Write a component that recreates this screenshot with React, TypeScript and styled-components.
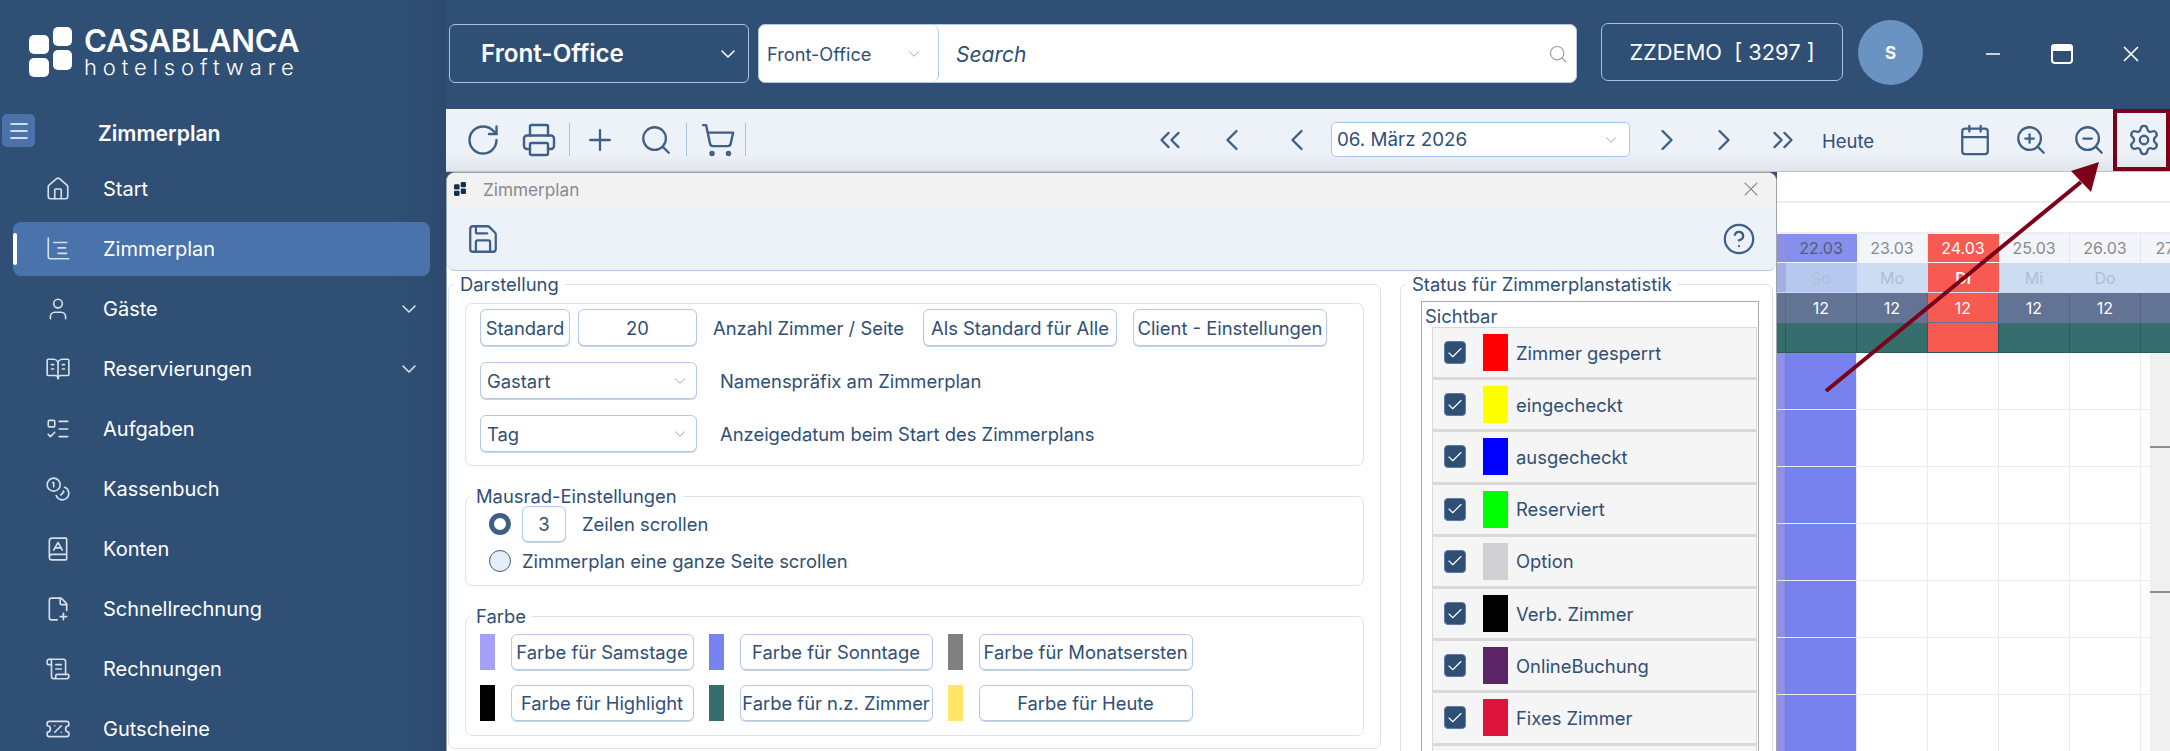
import React from 'react';
import styled, { createGlobalStyle } from 'styled-components';
import {
  RotateCw, Printer, Plus, Search, ShoppingCart, ChevronsLeft, ChevronLeft, ChevronRight, ChevronsRight,
  Calendar, ZoomIn, ZoomOut, Settings, Save, CircleHelp, X, Minus, House, Check, User, BookOpenText,
  ListTodo, Coins, BookA, FilePlus2, ScrollText, TicketPercent, ChevronDown, Menu,
} from 'lucide-react';

const Global = createGlobalStyle`
  html, body { margin: 0; padding: 0; height: 100%; overflow: hidden; background: #304f75; }
  * { box-sizing: border-box; }
  body { font-family: Inter, "Liberation Sans", sans-serif; color: #304f75; }
`;

const Page = styled.div`
  position: relative;
  display: flex;
  width: 2170px;
  height: 751px;
  overflow: hidden;
`;
const Sidebar = styled.aside`
  width: 446px;
  flex: none;
  background: linear-gradient(90deg, #304f75 88%, #2d4a6e 100%);
  color: #fff;
`;
const LogoBlock = styled.div`
  height: 109px;
  padding: 27px 0 0 29px;
  display: flex;
  gap: 12px;
`;
const LogoWords = styled.div`
  display: flex;
  flex-direction: column;
`;
const LogoTop = styled.div`
  font-size: 31.3px;
  font-weight: 600;
  line-height: 29px;
  letter-spacing: -0.2px;
`;
const LogoBottom = styled.div`
  font-size: 22px;
  font-weight: 300;
  line-height: 22px;
  letter-spacing: 5.9px;
  white-space: nowrap;
`;
const SideTitleRow = styled.div`
  height: 53px;
  display: flex;
  align-items: flex-start;
  padding: 5px 0 0 2px;
`;
const Burger = styled.div`
  width: 33px;
  height: 33px;
  background: #4a72ab;
  border-radius: 5px;
  display: flex;
  align-items: center;
  justify-content: center;
`;
const SideTitle = styled.div`
  margin: 6px 0 0 63px;
  font-size: 21.2px;
  line-height: 26px;
  font-weight: 600;
`;
const NavItem = styled.div<{ $active?: boolean }>`
  position: relative;
  width: 417px;
  height: 54px;
  margin: 0 0 6px 13px;
  padding: 0 9px 0 32px;
  display: flex;
  align-items: center;
  gap: 32px;
  font-size: 20px;
  border-radius: 8px;
  background: ${(p) => (p.$active ? '#4a72ab' : 'transparent')};
  svg { color: #d6dfea; flex: none; }
`;
const ActiveBar = styled.span`
  position: absolute;
  left: 0;
  top: 11px;
  width: 4px;
  height: 32px;
  background: #fff;
  border-radius: 2px;
`;
const NavChevron = styled.span`
  margin-left: auto;
  display: flex;
`;
const Right = styled.div`
  flex: 1;
  min-width: 0;
  display: flex;
  flex-direction: column;
`;
const Header = styled.header`
  height: 109px;
  flex: none;
  display: flex;
  align-items: flex-start;
  padding: 24px 0 0 3px;
  background: #304f75;
`;
const AreaSelect = styled.div`
  width: 300px;
  height: 59px;
  border: 1px solid #a9c1df;
  border-radius: 6px;
  display: flex;
  align-items: center;
  justify-content: space-between;
  padding: 0 8px 0 31px;
  color: #fff;
  font-size: 24.2px;
  font-weight: 600;
`;
const SearchBox = styled.div`
  width: 819px;
  height: 59px;
  margin-left: 9px;
  background: #fff;
  border: 1px solid #b3c9e4;
  border-radius: 7px;
  display: flex;
  align-items: center;
`;
const SearchScope = styled.div`
  width: 180px;
  height: 100%;
  border-right: 1px solid #b3c9e4;
  border-radius: 0 7px 7px 0;
  display: flex;
  align-items: center;
  justify-content: space-between;
  padding: 1px 15px 0 8px;
  font-size: 18.2px;
  color: #304f75;
  svg { color: #8a9bb0; }
`;
const SearchText = styled.div`
  flex: 1;
  padding: 1px 0 0 17px;
  font-size: 21px;
  font-style: italic;
`;
const SearchIcon = styled.span`
  display: flex;
  color: #9a9a9a;
  margin-right: 8px;
`;
const CompanyBadge = styled.div`
  width: 242px;
  height: 58px;
  margin: -1px 0 0 24px;
  border: 1px solid #a9c1df;
  border-radius: 7px;
  display: flex;
  align-items: center;
  justify-content: center;
  color: #fff;
  font-size: 21.8px;
  white-space: pre;
`;
const Avatar = styled.div`
  width: 65px;
  height: 65px;
  margin: -4px 0 0 15px;
  border-radius: 50%;
  background: #6a93c1;
  display: flex;
  align-items: center;
  justify-content: center;
  color: #fff;
  font-size: 17px;
  font-weight: 700;
`;
const WinButtons = styled.div`
  margin-left: 35px;
  height: 59px;
  display: flex;
  align-items: center;
`;
const WinButton = styled.div`
  width: 69px;
  display: flex;
  justify-content: center;
  color: #fff;
`;
const Toolbar = styled.div`
  position: relative;
  height: 63px;
  flex: none;
  display: grid;
  grid-template-columns: 693px 500px 1fr;
  align-items: center;
  padding-bottom: 2px;
  background: linear-gradient(180deg, #edf2f9 72%, #dfe4ea 98%, #a8adb3 100%);
`;
const ToolGroup = styled.div<{ $end?: boolean; $pad?: number }>`
  display: flex;
  align-items: center;
  justify-content: ${(p) => (p.$end ? 'flex-end' : 'flex-start')};
  padding-left: ${(p) => p.$pad ?? 0}px;
`;
const Slot = styled.div<{ $w: number }>`
  width: ${(p) => p.$w}px;
  flex: none;
  display: flex;
  justify-content: center;
  color: #3f5f86;
`;
const ToolDivider = styled.div<{ $ml?: number; $mr?: number }>`
  width: 1px;
  height: 33px;
  flex: none;
  background: #a9c1df;
  margin: 0 ${(p) => p.$mr ?? 0}px 0 ${(p) => p.$ml ?? 0}px;
`;
const DateField = styled.div`
  width: 299px;
  height: 35px;
  flex: none;
  background: #fff;
  border: 1px solid #a9c6ea;
  border-radius: 5px;
  display: flex;
  align-items: center;
  justify-content: space-between;
  padding: 0 9px 0 5px;
  font-size: 18.8px;
  svg { color: #8a9bb0; }
`;
const TodayLabel = styled.div`
  font-size: 18.5px;
  margin: 2px 0 0 0;
  white-space: nowrap;
`;
const GearFrame = styled.div`
  position: absolute;
  right: 0;
  top: 0;
  width: 57px;
  height: 62px;
  border: 4px solid #7b0019;
`;
const Workspace = styled.div`
  flex: 1;
  min-height: 0;
  display: flex;
`;
const Modal = styled.section`
  width: 1331px;
  flex: none;
  height: 579px;
  overflow: hidden;
  background: #fff;
  border: 1px solid #9fa5ac;
  border-bottom: 0;
  border-radius: 9px 9px 0 0;
`;
const ModalTitle = styled.div`
  height: 35px;
  background: #f2f2f2;
  display: flex;
  align-items: center;
  padding: 0 13px 3px 7px;
  gap: 17px;
  color: #8a8a8a;
  font-size: 17.2px;
`;
const ModalClose = styled.span`
  margin-left: auto;
  display: flex;
  color: #8f8f8f;
`;
const ModalTools = styled.div`
  height: 63px;
  background: #edf2f9;
  border-bottom: 1px solid #b3c9e4;
  border-radius: 0 0 8px 8px;
  display: flex;
  align-items: center;
  justify-content: space-between;
  padding: 0 20px 0 19px;
  color: #3f5f86;
`;
const ModalBody = styled.div`
  display: flex;
  gap: 19px;
  padding: 3px 0 0 1px;
`;
const Box = styled.fieldset<{ $w: number; $h?: number; $pad?: string; $mb?: number; $mt?: number }>`
  width: ${(p) => p.$w}px;
  height: ${(p) => (p.$h ? `${p.$h}px` : 'auto')};
  flex: none;
  margin: ${(p) => p.$mt ?? 0}px 0 ${(p) => p.$mb ?? 0}px;
  padding: ${(p) => p.$pad ?? '0 16px'};
  border: 1px solid #dbe3ec;
  border-radius: 7px;
  min-width: 0;
`;
const Legend = styled.legend<{ $ml: number }>`
  font-size: 18.4px;
  line-height: 20px;
  padding: 0 6px;
  margin-left: ${(p) => p.$ml}px;
  white-space: nowrap;
`;
const FormRow = styled.div<{ $mt?: number; $gap?: number }>`
  display: flex;
  align-items: center;
  margin-top: ${(p) => p.$mt ?? 0}px;
  gap: ${(p) => p.$gap ?? 0}px;
`;
const Control = styled.div<{ $w: number; $ml?: number; $h?: number; $center?: boolean }>`
  width: ${(p) => p.$w}px;
  height: ${(p) => p.$h ?? 37}px;
  margin-left: ${(p) => p.$ml ?? 0}px;
  flex: none;
  border: 1px solid #b3c9e4;
  border-radius: 6px;
  display: flex;
  align-items: center;
  justify-content: ${(p) => (p.$center ? 'center' : 'space-between')};
  padding: ${(p) => (p.$center ? '0 2px' : '0 7px 0 6px')};
  font-size: 18.4px;
  white-space: nowrap;
  background: #fff;
  box-shadow: 0 1px 0 #c6d6ea;
  svg { color: #8a9bb0; }
`;
const Label = styled.span<{ $ml: number }>`
  margin-left: ${(p) => p.$ml}px;
  font-size: 18.4px;
  white-space: nowrap;
`;
const Radio = styled.span<{ $on?: boolean }>`
  width: 22px;
  height: 22px;
  flex: none;
  border-radius: 50%;
  border: ${(p) => (p.$on ? '5px solid #3f5f86' : '1px solid #3f5f86')};
  background: ${(p) => (p.$on ? '#fff' : '#e6eef8')};
`;
const ColorGrid = styled.div`
  display: grid;
  grid-template-columns: 15px 183px 15px 193px 15px 214px;
  column-gap: 15.5px;
  row-gap: 15px;
  margin-top: 8px;
`;
const Swatch = styled.span<{ $c: string }>`
  display: block;
  width: 100%;
  height: 100%;
  background: ${(p) => p.$c};
`;
const ColorBtn = styled.div`
  height: 36px;
  border: 1px solid #b3c9e4;
  border-radius: 6px;
  box-shadow: 0 1px 0 #c6d6ea;
  display: flex;
  align-items: center;
  justify-content: center;
  font-size: 18.4px;
  white-space: nowrap;
`;
const VisibleBox = styled.div`
  margin: 7px 0 0 20px;
  width: 338px;
  border: 1px solid #aaaaaa;
  padding: 0 1px 0 10px;
`;
const VisibleTitle = styled.div`
  margin-left: -7px;
  height: 25px;
  line-height: 28px;
  font-size: 18.4px;
`;
const StatusRow = styled.div`
  height: 52.2px;
  background: #f5f5f5;
  border: 1px solid #d9d9d9;
  border-width: 1px 1px 2px 1px;
  display: flex;
  align-items: center;
  padding-left: 11px;
  font-size: 18.4px;
`;
const Tick = styled.span`
  width: 22px;
  height: 23px;
  flex: none;
  border-radius: 4px;
  background: #304f75;
  border: 1px solid #5c7da6;
  display: flex;
  align-items: center;
  justify-content: center;
  color: #fff;
`;
const StatusColor = styled.span<{ $c: string }>`
  width: 25px;
  height: 37px;
  flex: none;
  margin: 0 8px 0 17px;
  background: ${(p) => p.$c};
`;
const Plan = styled.div`
  flex: 1;
  min-width: 0;
  overflow: hidden;
  background: #fff;
`;
const PlanBlank = styled.div`
  height: 31px;
  border-bottom: 2px solid #eeeeee;
`;
const PlanRow = styled.div<{ $h: number; $bg?: string; $line?: string }>`
  height: ${(p) => p.$h}px;
  display: flex;
  background: ${(p) => p.$bg ?? 'transparent'};
  border-bottom: 1px solid ${(p) => p.$line ?? 'transparent'};
`;
const PlanCell = styled.div<{ $w?: number; $bg?: string; $c?: string; $line?: string; $bold?: boolean }>`
  width: ${(p) => p.$w ?? 71}px;
  flex: none;
  display: flex;
  align-items: center;
  justify-content: center;
  background: ${(p) => p.$bg ?? 'transparent'};
  color: ${(p) => p.$c ?? '#fff'};
  border-right: 1px solid ${(p) => p.$line ?? 'transparent'};
  font-size: 16px;
  font-weight: ${(p) => (p.$bold ? 600 : 400)};
`;
const PlanBody = styled.div`
  display: flex;
`;
const PlanGrid = styled.div`
  width: 373px;
  flex: none;
`;
const Rail = styled.div`
  flex: 1;
  display: flex;
  flex-direction: column;
`;
const RailPart = styled.div<{ $h: number }>`
  height: ${(p) => p.$h}px;
  flex: none;
  background: #f0f0f0;
  border-bottom: 2px solid #8f8f8f;
`;
const Annotation = styled.svg`
  position: absolute;
  inset: 0;
  pointer-events: none;
`;

const Logo = ({ s = 43 }: { s?: number }) => (
  <svg width={s} height={s * 50 / 43} viewBox="0 0 43 50" fill="#fff">
    <rect x="0" y="8" width="20" height="19" rx="5" />
    <rect x="24" y="0" width="19" height="19" rx="5" />
    <rect x="0" y="31" width="20" height="19" rx="5" />
    <rect x="24" y="23" width="19" height="20" rx="5" />
  </svg>
);
const SmallLogo = () => (
  <svg width="12" height="14" viewBox="0 0 43 50" fill="#12304f">
    <rect x="0" y="8" width="20" height="19" rx="5" />
    <rect x="24" y="0" width="19" height="19" rx="5" />
    <rect x="0" y="31" width="20" height="19" rx="5" />
    <rect x="24" y="23" width="19" height="20" rx="5" />
  </svg>
);
const GanttIcon = () => (
  <svg width="26" height="26" viewBox="0 0 24 24" fill="none" stroke="currentColor" strokeWidth="1.5" strokeLinecap="round">
    <path d="M3 2v17a2 2 0 0 0 2 2h17" />
    <path d="M8 6h12M12 11h7M12 16h8" />
  </svg>
);
const RestoreIcon = () => (
  <svg width="24" height="24" viewBox="0 0 24 24" fill="none" stroke="currentColor" strokeWidth="2">
    <rect x="2" y="3" width="20" height="18" rx="3" />
    <path d="M2 8h20V6a3 3 0 0 0-3-3H5a3 3 0 0 0-3 3z" fill="currentColor" />
  </svg>
);

const navItems: { label: string; icon: React.ReactNode; active?: boolean; more?: boolean }[] = [
  { label: 'Start', icon: <House size={26} strokeWidth={1.5} /> },
  { label: 'Zimmerplan', icon: <GanttIcon />, active: true },
  { label: 'Gäste', icon: <User size={26} strokeWidth={1.5} />, more: true },
  { label: 'Reservierungen', icon: <BookOpenText size={26} strokeWidth={1.5} />, more: true },
  { label: 'Aufgaben', icon: <ListTodo size={26} strokeWidth={1.5} /> },
  { label: 'Kassenbuch', icon: <Coins size={26} strokeWidth={1.5} /> },
  { label: 'Konten', icon: <BookA size={26} strokeWidth={1.5} /> },
  { label: 'Schnellrechnung', icon: <FilePlus2 size={26} strokeWidth={1.5} /> },
  { label: 'Rechnungen', icon: <ScrollText size={26} strokeWidth={1.5} /> },
  { label: 'Gutscheine', icon: <TicketPercent size={26} strokeWidth={1.5} /> },
];

const colors: [string, string][] = [
  ['#a6a0fa', 'Farbe für Samstage'],
  ['#7882f0', 'Farbe für Sonntage'],
  ['#808080', 'Farbe für Monatsersten'],
  ['#000000', 'Farbe für Highlight'],
  ['#366e6e', 'Farbe für n.z. Zimmer'],
  ['#ffe666', 'Farbe für Heute'],
];

const statuses: [string, string][] = [
  ['#ff0000', 'Zimmer gesperrt'],
  ['#ffff00', 'eingecheckt'],
  ['#0000ff', 'ausgecheckt'],
  ['#00ff00', 'Reserviert'],
  ['#d0d0d2', 'Option'],
  ['#000000', 'Verb. Zimmer'],
  ['#5a2466', 'OnlineBuchung'],
  ['#dc143c', 'Fixes Zimmer'],
];

const days = [
  { d: '22.03', w: 'So', n: '12', kind: 'sun' },
  { d: '23.03', w: 'Mo', n: '12', kind: '' },
  { d: '24.03', w: 'Di', n: '12', kind: 'today' },
  { d: '25.03', w: 'Mi', n: '12', kind: '' },
  { d: '26.03', w: 'Do', n: '12', kind: '' },
  { d: '27.03', w: '', n: '', kind: '' },
];
const RED = '#f75a50';

export default function App() {
  return (
    <Page>
      <Global />
      <Sidebar>
        <LogoBlock>
          <Logo />
          <LogoWords>
            <LogoTop>CASABLANCA</LogoTop>
            <LogoBottom>hotelsoftware</LogoBottom>
          </LogoWords>
        </LogoBlock>
        <SideTitleRow>
          <Burger><Menu size={24} color="#fff" strokeWidth={1.6} /></Burger>
          <SideTitle>Zimmerplan</SideTitle>
        </SideTitleRow>
        {navItems.map((n) => (
          <NavItem key={n.label} $active={n.active}>
            {n.active && <ActiveBar />}
            {n.icon}
            <span>{n.label}</span>
            {n.more && <NavChevron><ChevronDown size={24} strokeWidth={1.6} /></NavChevron>}
          </NavItem>
        ))}
      </Sidebar>
      <Right>
        <Header>
          <AreaSelect>Front-Office<ChevronDown size={24} strokeWidth={1.5} /></AreaSelect>
          <SearchBox>
            <SearchScope>Front-Office<ChevronDown size={18} strokeWidth={1.2} /></SearchScope>
            <SearchText>Search</SearchText>
            <SearchIcon><Search size={20} strokeWidth={1.4} /></SearchIcon>
          </SearchBox>
          <CompanyBadge>ZZDEMO  [ 3297 ]</CompanyBadge>
          <Avatar>S</Avatar>
          <WinButtons>
            <WinButton><Minus size={22} strokeWidth={1.8} /></WinButton>
            <WinButton><RestoreIcon /></WinButton>
            <WinButton><X size={26} strokeWidth={1.6} /></WinButton>
          </WinButtons>
        </Header>
        <Toolbar>
          <ToolGroup $pad={9}>
            <Slot $w={56}><RotateCw size={36} strokeWidth={1.6} /></Slot>
            <Slot $w={56}><Printer size={36} strokeWidth={1.6} /></Slot>
            <ToolDivider $ml={2} $mr={2} />
            <Slot $w={56}><Plus size={34} strokeWidth={1.6} /></Slot>
            <Slot $w={56}><Search size={34} strokeWidth={1.6} /></Slot>
            <ToolDivider $ml={2} $mr={4} />
            <Slot $w={54}><ShoppingCart size={36} strokeWidth={1.6} /></Slot>
            <ToolDivider />
          </ToolGroup>
          <ToolGroup>
            <Slot $w={62}><ChevronsLeft size={34} strokeWidth={1.6} /></Slot>
            <Slot $w={62}><ChevronLeft size={36} strokeWidth={1.6} /></Slot>
            <Slot $w={68}><ChevronLeft size={36} strokeWidth={1.6} /></Slot>
            <DateField>06. März 2026<ChevronDown size={18} strokeWidth={1.2} /></DateField>
            <Slot $w={74}><ChevronRight size={36} strokeWidth={1.6} /></Slot>
            <Slot $w={40}><ChevronRight size={36} strokeWidth={1.6} /></Slot>
            <Slot $w={78}><ChevronsRight size={34} strokeWidth={1.6} /></Slot>
            <TodayLabel>Heute</TodayLabel>
          </ToolGroup>
          <ToolGroup $end>
            <Slot $w={54}><Calendar size={34} strokeWidth={1.6} /></Slot>
            <Slot $w={58}><ZoomIn size={34} strokeWidth={1.6} /></Slot>
            <Slot $w={58}><ZoomOut size={34} strokeWidth={1.6} /></Slot>
            <Slot $w={52}><Settings size={34} strokeWidth={1.6} /></Slot>
          </ToolGroup>
          <GearFrame />
        </Toolbar>
        <Workspace>
          <Modal>
            <ModalTitle>
              <SmallLogo />
              Zimmerplan
              <ModalClose><X size={24} strokeWidth={1.1} /></ModalClose>
            </ModalTitle>
            <ModalTools>
              <Save size={34} strokeWidth={1.6} />
              <CircleHelp size={34} strokeWidth={1.6} />
            </ModalTools>
            <ModalBody>
              <Box $w={933} $h={475}>
                <Legend $ml={-11}>Darstellung</Legend>
                <Box $w={899} $h={163} $pad="5px 14px 0" $mt={9} $mb={20}>
                  <FormRow>
                    <Control $w={90} $center>Standard</Control>
                    <Control $w={119} $ml={8} $center>20</Control>
                    <Label $ml={16}>Anzahl Zimmer / Seite</Label>
                    <Control $w={194} $ml={19} $center>Als Standard für Alle</Control>
                    <Control $w={194} $ml={16} $center>Client - Einstellungen</Control>
                  </FormRow>
                  <FormRow $mt={16}>
                    <Control $w={217}>Gastart<ChevronDown size={18} strokeWidth={1.2} /></Control>
                    <Label $ml={23}>Namenspräfix am Zimmerplan</Label>
                  </FormRow>
                  <FormRow $mt={16}>
                    <Control $w={217}>Tag<ChevronDown size={18} strokeWidth={1.2} /></Control>
                    <Label $ml={23}>Anzeigedatum beim Start des Zimmerplans</Label>
                  </FormRow>
                </Box>
                <Box $w={899} $h={100} $pad="0 14px 0 23px" $mb={20}>
                  <Legend $ml={-19}>Mausrad-Einstellungen</Legend>
                  <FormRow>
                    <Radio $on />
                    <Control $w={44} $h={36} $ml={11} $center>3</Control>
                    <Label $ml={16}>Zeilen scrollen</Label>
                  </FormRow>
                  <FormRow $mt={8}>
                    <Radio />
                    <Label $ml={11}>Zimmerplan eine ganze Seite scrollen</Label>
                  </FormRow>
                </Box>
                <Box $w={899} $h={130} $pad="0 14px">
                  <Legend $ml={-10}>Farbe</Legend>
                  <ColorGrid>
                    {colors.map(([c, t]) => (
                      <React.Fragment key={t}>
                        <Swatch $c={c} />
                        <ColorBtn>{t}</ColorBtn>
                      </React.Fragment>
                    ))}
                  </ColorGrid>
                </Box>
              </Box>
              <Box $w={373} $pad="0">
                <Legend $ml={5}>Status für Zimmerplanstatistik</Legend>
                <VisibleBox>
                  <VisibleTitle>Sichtbar</VisibleTitle>
                  {statuses.map(([c, t]) => (
                    <StatusRow key={t}>
                      <Tick><Check size={18} strokeWidth={1.5} /></Tick>
                      <StatusColor $c={c} />
                      {t}
                    </StatusRow>
                  ))}
                  <StatusRow />
                </VisibleBox>
              </Box>
            </ModalBody>
          </Modal>
          <Plan>
            <PlanBlank />
            <PlanBlank />
            <PlanRow $h={29} $bg="#f2f5fa">
              <PlanCell $w={9} $bg="#8f8fe0" />
              {days.map((x) => (
                <PlanCell
                  key={x.d}
                  $bg={x.kind === 'today' ? RED : x.kind === 'sun' ? '#8490ec' : 'transparent'}
                  $c={x.kind === 'today' ? '#fff' : x.kind === 'sun' ? '#555a7a' : '#8a8a8a'}
                  $line={x.kind ? 'transparent' : '#e2e6ec'}
                >{x.d}</PlanCell>
              ))}
            </PlanRow>
            <PlanRow $h={30} $bg="#ccdcf2">
              <PlanCell $w={9} $bg="#a4aee4" />
              {days.map((x) => (
                <PlanCell
                  key={x.d}
                  $bg={x.kind === 'today' ? RED : x.kind === 'sun' ? '#b7c8ee' : 'transparent'}
                  $c={x.kind === 'today' ? '#fff' : '#b0bfd4'}
                  $bold={x.kind === 'today'}
                >{x.w}</PlanCell>
              ))}
            </PlanRow>
            <PlanRow $h={30} $bg="#637394">
              <PlanCell $w={9} $line="#55648a" />
              {days.map((x) => (
                <PlanCell key={x.d} $bg={x.kind === 'today' ? RED : 'transparent'} $line="#55648a">{x.n}</PlanCell>
              ))}
            </PlanRow>
            <PlanRow $h={30} $bg="#366e6e" $line="#2a5a5a">
              <PlanCell $w={9} $line="#2a5a5a" />
              {days.map((x) => (
                <PlanCell key={x.d} $bg={x.kind === 'today' ? RED : 'transparent'} $line="#2a5a5a" />
              ))}
            </PlanRow>
            <PlanBody>
              <PlanGrid>
                {[0, 1, 2, 3, 4, 5, 6].map((i) => (
                  <PlanRow key={i} $h={57} $line="#ebebeb">
                    <PlanCell $w={9} $bg="#9090e6" $line="#7a7ad8" />
                    {days.slice(0, 5).map((x) => (
                      <PlanCell key={x.d} $bg={x.kind === 'sun' ? '#7782ee' : 'transparent'} $line="#ebebeb" />
                    ))}
                  </PlanRow>
                ))}
              </PlanGrid>
              <Rail>
                <RailPart $h={95} />
                <RailPart $h={145} />
                <RailPart $h={200} />
              </Rail>
            </PlanBody>
          </Plan>
        </Workspace>
      </Right>
      <Annotation width="2170" height="751" viewBox="0 0 2170 751">
        <path d="M1826 391L2081 182" stroke="#7b0019" strokeWidth="4" fill="none" />
        <path d="M2099 162L2071 171L2091 192Z" fill="#7b0019" />
      </Annotation>
    </Page>
  );
}
